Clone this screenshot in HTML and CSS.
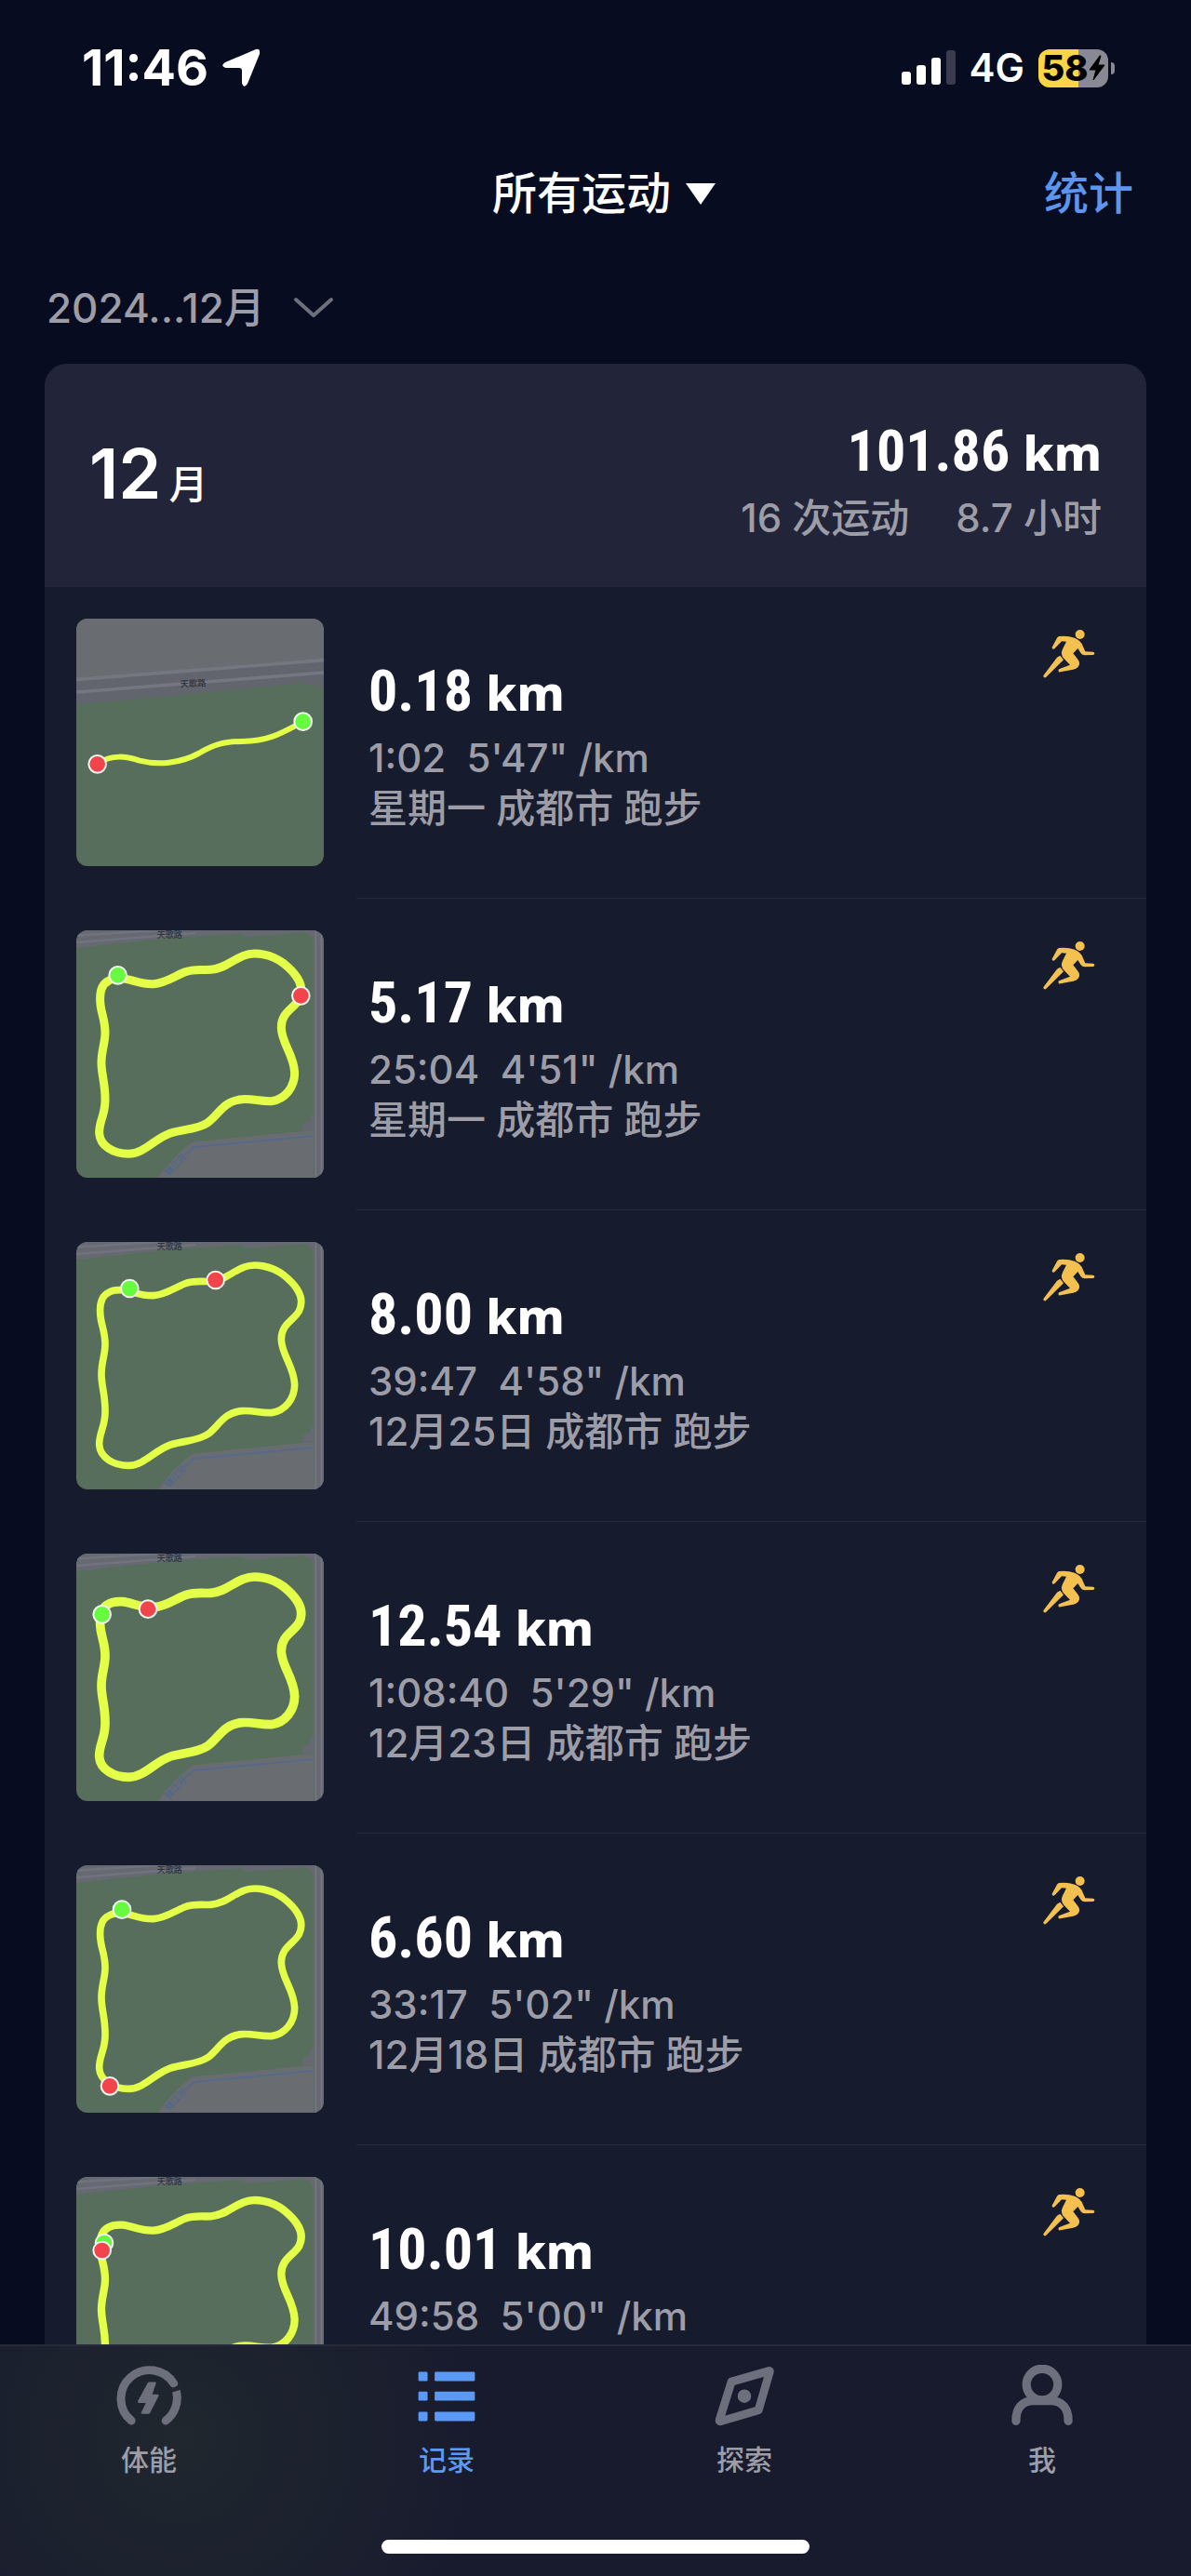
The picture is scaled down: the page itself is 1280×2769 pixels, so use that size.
FILE: index.html
```html
<!DOCTYPE html>
<html lang="zh-CN">

<head>
    <meta charset="UTF-8">
    <meta name="viewport" content="width=device-width, initial-scale=1.0">
    <title>记录</title>

    <link rel="stylesheet" href="styles.css">
</head>

<body>
    <svg class="sprite" aria-hidden="true">
        <symbol id="runner" viewBox="90 75 174 165">
            <circle cx="212" cy="96" r="15" />
            <path d="M145 102Q172 99 195 107Q216 116 221 133L229 151L254 152A5 5 0 0 1 254 162L226 163Q218 162 214 155L205 141L190 157L205 176Q216 190 205 202Q200 207 190 209L149 217A5 5 0 0 1 146 207L180 194L160 173Q148 160 156 143L168 119L153 118L130 142A5 5 0 0 1 122 137L138 107Q141 103 145 102Z" />
            <path d="M148 164L159 178L103 233A5 5 0 0 1 95 227L138 170Z" />
        </symbol>

        <symbol id="park" viewBox="36 45 798 798">
            <rect x="36" y="45" width="798" height="798" fill="#586e5c" />
            <path d="M36 45H834V843H800V90Q800 55 765 52L590 66L560 55L330 70L36 102Z" fill="#666972" />
            <path d="M36 62L300 45M36 84L420 54" stroke="#70737e" stroke-width="8" />
            <path d="M790 640V660L765 668V692L800 688V640Z" fill="#666972" />
            <path d="M300 843Q350 770 410 728L800 690V843Z" fill="#696d72" />
            <path d="M385 770L415 744L800 708" fill="none" stroke="#56698b" stroke-width="6" />
            <path d="M808 45V843M826 45V843" stroke="#74777f" stroke-width="5" />
            <text x="296" y="70" font-size="27" fill="#2c313b">天歌路</text>
            <text x="334" y="838" font-size="28" fill="#4d658f" transform="rotate(-46 334 838)">锦江河</text>
        </symbol>

        <symbol id="loop" viewBox="36 45 798 798">
            <path d="M140 208C115 220 110 250 114 285C117 315 129 335 129 375C129 410 116 435 117 475C118 515 130 540 129 595C128 645 109 660 110 700C113 740 155 766 205 766C255 766 290 715 340 699C385 685 425 688 460 665C495 640 510 595 570 590C605 587 625 597 665 596C710 590 740 550 740 505C738 445 698 410 697 360C696 310 735 300 754 268C778 220 740 180 705 152C665 122 610 112 575 127C535 143 515 168 470 172C440 174 415 168 385 180C350 194 325 215 285 218C245 220 215 203 185 200Q155 198 140 208Z" fill="none" stroke="#e3ff48" stroke-linejoin="round" />
        </symbol>
    </svg>

    <header class="status-bar">
        <div class="status-left">
            <span class="time">11:46</span>
            <svg class="location" viewBox="0 0 42 42">
                <path d="M37 1Q42 0 41 6L28 38Q24 44 22 37V24Q22 21 19 21H5Q-2 19 4 15Z" fill="#fff" />
            </svg>
        </div>
        <div class="status-right">
            <svg class="signal" viewBox="0 0 58 38">
                <rect y="23" width="10" height="14" rx="3" fill="#fff" />
                <rect x="16" y="16" width="10" height="21" rx="3" fill="#fff" />
                <rect x="32" y="8" width="10" height="29" rx="3" fill="#fff" />
                <rect x="48" width="10" height="37" rx="3" fill="#3a3c4d" />
            </svg>
            <span class="network">4G</span>
            <div class="battery">
                <span>58</span>
                <svg class="bolt" viewBox="0 0 18 28">
                    <path d="M12 1L1 16H8L5 27L17 11H10L13 1Z" fill="#000" stroke="#000" stroke-linejoin="round" />
                </svg>
            </div>
        </div>
    </header>

    <div class="title-bar">
        <button class="sport">所有运动 <svg viewBox="0 0 32 23"><path d="M0 0H32L16 23Z" fill="#fff" /></svg></button>
        <a class="stats" href="#">统计</a>
    </div>

    <button class="period">2024...12月
        <svg viewBox="0 0 44 24"><path d="M3 3L22 20L41 3" fill="none" stroke="#6e707d" stroke-width="4" stroke-linecap="round" stroke-linejoin="round" /></svg>
    </button>

    <main class="records">
        <div class="summary">
            <h1>12<small>月</small></h1>
            <div class="totals">
                <p class="distance">101.86 <span>km</span></p>
                <p class="counts"><span>16 次运动</span><span>8.7 小时</span></p>
            </div>
        </div>

        <ul class="runs">
            <li class="run">
                <svg class="map" viewBox="36 45 798 798">
                    <rect x="36" y="45" width="798" height="798" fill="#586e5c" />
                    <path d="M36 45H834V268L765 252L36 322Z" fill="#696d72" />
                    <path d="M36 236L834 174V268L765 252L36 322Z" fill="#62656e" />
                    <path d="M36 241L834 179M36 282L834 219" stroke="#747781" stroke-width="11" />
                    <text x="371" y="266" font-size="28" fill="#2c313b" transform="rotate(-3 371 266)">天歌路</text>
                    <path d="M104 514C150 480 200 490 240 503C300 518 370 512 430 480C480 450 510 442 570 441C660 438 690 418 767 377" fill="none" stroke="#e3ff48" stroke-width="18" />
                    <circle class="finish" cx="104" cy="514" r="28" />
                    <circle class="start" cx="767" cy="377" r="28" />
                </svg>
                <div class="detail">
                    <div class="text">
                        <p class="distance">0.18 <span>km</span></p>
                        <p>1:02&nbsp; 5'47" /km</p>
                        <p>星期一 成都市 跑步</p>
                    </div>
                    <svg class="runner"><use href="#runner" /></svg>
                </div>
            </li>

            <li class="run">
                <svg class="map" viewBox="36 45 798 798">
                    <use href="#park" x="36" y="45" width="798" height="798" />
                    <use href="#loop" x="36" y="45" width="798" height="798" stroke-width="27" />
                    <circle class="start" cx="170" cy="190" r="28" />
                    <circle class="finish" cx="760" cy="256" r="28" />
                </svg>
                <div class="detail">
                    <div class="text">
                        <p class="distance">5.17 <span>km</span></p>
                        <p>25:04&nbsp; 4'51" /km</p>
                        <p>星期一 成都市 跑步</p>
                    </div>
                    <svg class="runner"><use href="#runner" /></svg>
                </div>
            </li>

            <li class="run">
                <svg class="map" viewBox="36 45 798 798">
                    <use href="#park" x="36" y="45" width="798" height="798" />
                    <use href="#loop" x="36" y="45" width="798" height="798" stroke-width="23" />
                    <circle class="start" cx="208" cy="195" r="28" />
                    <circle class="finish" cx="485" cy="168" r="28" />
                </svg>
                <div class="detail">
                    <div class="text">
                        <p class="distance">8.00 <span>km</span></p>
                        <p>39:47&nbsp; 4'58" /km</p>
                        <p>12月25日 成都市 跑步</p>
                    </div>
                    <svg class="runner"><use href="#runner" /></svg>
                </div>
            </li>

            <li class="run">
                <svg class="map" viewBox="36 45 798 798">
                    <use href="#park" x="36" y="45" width="798" height="798" />
                    <use href="#loop" x="36" y="45" width="798" height="798" stroke-width="29" />
                    <circle class="start" cx="119" cy="241" r="28" />
                    <circle class="finish" cx="267" cy="224" r="28" />
                </svg>
                <div class="detail">
                    <div class="text">
                        <p class="distance">12.54 <span>km</span></p>
                        <p>1:08:40&nbsp; 5'29" /km</p>
                        <p>12月23日 成都市 跑步</p>
                    </div>
                    <svg class="runner"><use href="#runner" /></svg>
                </div>
            </li>

            <li class="run">
                <svg class="map" viewBox="36 45 798 798">
                    <use href="#park" x="36" y="45" width="798" height="798" />
                    <use href="#loop" x="36" y="45" width="798" height="798" stroke-width="23" />
                    <circle class="start" cx="183" cy="188" r="28" />
                    <circle class="finish" cx="144" cy="757" r="28" />
                </svg>
                <div class="detail">
                    <div class="text">
                        <p class="distance">6.60 <span>km</span></p>
                        <p>33:17&nbsp; 5'02" /km</p>
                        <p>12月18日 成都市 跑步</p>
                    </div>
                    <svg class="runner"><use href="#runner" /></svg>
                </div>
            </li>

            <li class="run">
                <svg class="map" viewBox="36 45 798 798">
                    <use href="#park" x="36" y="45" width="798" height="798" />
                    <use href="#loop" x="36" y="45" width="798" height="798" stroke-width="25" />
                    <circle class="start" cx="126" cy="258" r="28" />
                    <circle class="finish" cx="119" cy="282" r="28" />
                </svg>
                <div class="detail">
                    <div class="text">
                        <p class="distance">10.01 <span>km</span></p>
                        <p>49:58&nbsp; 5'00" /km</p>
                    </div>
                    <svg class="runner"><use href="#runner" /></svg>
                </div>
            </li>
        </ul>
    </main>

    <footer class="tab-bar">
        <nav>
            <a href="#">
                <svg viewBox="0 0 216 200">
                    <path d="M51 182A93 93 0 1 1 189 61M197 85A93 93 0 0 1 163 182" fill="none" stroke="#6d6f7c" stroke-width="27" stroke-linecap="round" />
                    <path d="M180 78L212 64L214 80L182 90Z" fill="#20272e" />
                    <path d="M104 59Q106 56 110 56H129Q133 56 131 61L119 96H136Q142 97 139 103L112 156Q110 160 106 160H86Q80 159 84 154L98 124H76Q70 123 72 118Z" fill="#6d6f7c" />
                </svg>
                体能
            </a>
            <a class="active" href="#">
                <svg viewBox="0 0 216 200" fill="#5b99f7">
                    <rect x="16" y="23" width="30" height="30" rx="4" />
                    <rect x="69" y="23" width="131" height="30" rx="4" />
                    <rect x="16" y="87" width="30" height="30" rx="4" />
                    <rect x="69" y="87" width="131" height="30" rx="4" />
                    <rect x="16" y="153" width="30" height="30" rx="4" />
                    <rect x="69" y="153" width="131" height="30" rx="4" />
                </svg>
                记录
            </a>
            <a href="#">
                <svg viewBox="0 0 216 200" fill="none" stroke="#6d6f7c" stroke-width="27" stroke-linejoin="round">
                    <path d="M66 55L188 20Q192 18 190 24L154 148L30 184Q25 185 27 179Z" />
                    <circle cx="108" cy="102" r="22" fill="#6d6f7c" stroke="none" />
                </svg>
                探索
            </a>
            <a href="#">
                <svg viewBox="0 0 216 200" fill="none" stroke="#6d6f7c" stroke-width="28" stroke-linecap="round">
                    <circle cx="108" cy="64" r="51" />
                    <path d="M23 183C22 140 45 117 80 117H136C171 117 194 140 193 183" />
                </svg>
                我
            </a>
        </nav>
        <div class="home-indicator"></div>
    </footer>
</body>

</html>
```
FILE: styles.css
```css
* {
    box-sizing: border-box;
}

body {
    display: flex;
    flex-direction: column;
    height: 100vh;
    margin: 0;
    overflow: hidden;
    font-family: Inter, "Noto Sans CJK SC", sans-serif;
    font-size: 42px;
    font-weight: 500;
    line-height: 54px;
    color: #9c9da7;
    background: #070c20;
}

h1,
p,
ul {
    margin: 0;
    padding: 0;
    list-style: none;
}

button {
    padding: 0;
    border: 0;
    font: inherit;
    color: inherit;
    background: none;
    cursor: pointer;
}

a {
    color: inherit;
    text-decoration: none;
}

svg {
    display: block;
    flex: none;
}

.sprite {
    position: absolute;
    width: 0;
    height: 0;
}

.status-bar {
    display: flex;
    flex: none;
    justify-content: space-between;
    align-items: center;
    height: 146px;
    padding: 0 89px 0 88px;
    color: #fff;
}

.status-left,
.status-right {
    display: flex;
    align-items: center;
}

.status-left {
    gap: 14px;
}

.time {
    font-size: 54px;
    font-weight: 700;
}

.location {
    width: 42px;
    height: 42px;
}

.signal {
    width: 58px;
    height: 38px;
}

.network {
    margin: 0 15px;
    font-weight: 600;
}

.battery {
    position: relative;
    display: flex;
    justify-content: center;
    align-items: center;
    width: 75px;
    height: 41px;
    border-radius: 12px;
    font-size: 38px;
    font-weight: 800;
    line-height: 41px;
    color: #000;
    background: linear-gradient(90deg, #f9d648 58%, #888993 58%);
}

.battery::after {
    content: "";
    position: absolute;
    left: 78px;
    width: 4px;
    height: 13px;
    border-radius: 0 4px 4px 0;
    background: #888993;
}

.bolt {
    width: 18px;
    height: 28px;
}

.title-bar {
    display: grid;
    grid-template-columns: 1fr auto 1fr;
    align-items: center;
    flex: none;
    height: 124px;
    padding: 0 62px 0 80px;
    font-size: 48px;
}

.sport {
    display: flex;
    grid-column: 2;
    align-items: center;
    gap: 16px;
    color: #fff;
}

.sport svg {
    width: 32px;
    height: 23px;
}

.stats {
    justify-self: end;
    color: #5b95ee;
}

.period {
    display: flex;
    flex: none;
    align-self: flex-start;
    align-items: center;
    gap: 30px;
    height: 121px;
    padding: 0 50px;
    font-size: 44px;
}

.period svg {
    width: 44px;
    height: 24px;
}

.records {
    flex: 1;
    min-height: 0;
    margin: 0 48px;
    overflow: hidden;
    border-radius: 24px 24px 0 0;
    background: #171b2e;
}

.summary {
    display: flex;
    justify-content: space-between;
    align-items: center;
    height: 240px;
    padding: 0 48px;
    background: #222439;
}

h1 {
    padding-top: 8px;
    font-size: 74px;
    font-weight: 600;
    line-height: 80px;
    color: #fff;
}

h1 small {
    margin-left: 8px;
    font-size: 42px;
    font-weight: 500;
}

.totals {
    padding-top: 6px;
    text-align: right;
}

.counts {
    display: flex;
    justify-content: flex-end;
    gap: 50px;
}

.distance {
    margin-bottom: 4px;
    font-family: "Roboto Condensed", "Liberation Sans Narrow", Roboto, sans-serif;
    font-size: 62px;
    font-weight: 700;
    line-height: 80px;
    color: #fff;
}

.distance span {
    font-family: "Noto Sans", sans-serif;
    font-size: 52px;
    font-weight: 800;
}

.run {
    display: flex;
    padding-left: 34px;
}

.map {
    width: 266px;
    height: 266px;
    margin: 34px 35px 35px 0;
    border-radius: 12px;
    font-family: "Noto Sans CJK SC", sans-serif;
}

.start,
.finish {
    stroke: #f3f5f0;
    stroke-width: 6px;
}

.start {
    fill: #66fb3f;
}

.finish {
    fill: #f2454b;
}

.detail {
    display: flex;
    flex: 1;
    justify-content: space-between;
    padding: 44px 54px 0 13px;
    border-bottom: 1px solid #272a3b;
}

.text {
    padding-top: 28px;
}

.runner {
    width: 58px;
    height: 55px;
    fill: #f4c04f;
}

.tab-bar {
    flex: none;
    padding: 20px 0 24px;
    border-top: 2px solid #272a3a;
    background: radial-gradient(circle at 15% 40%, #20272e, #181b2e 30%);
}

.tab-bar nav {
    display: flex;
}

.tab-bar a {
    display: flex;
    flex: 1;
    flex-direction: column;
    align-items: center;
    gap: 14px;
    font-size: 30px;
    line-height: 44px;
}

.tab-bar .active {
    color: #5b99f7;
}

.tab-bar svg {
    width: 72px;
    height: 66px;
}

.home-indicator {
    width: 36%;
    height: 15px;
    margin: 64px auto 0;
    border-radius: 8px;
    background: #fff;
}
```
